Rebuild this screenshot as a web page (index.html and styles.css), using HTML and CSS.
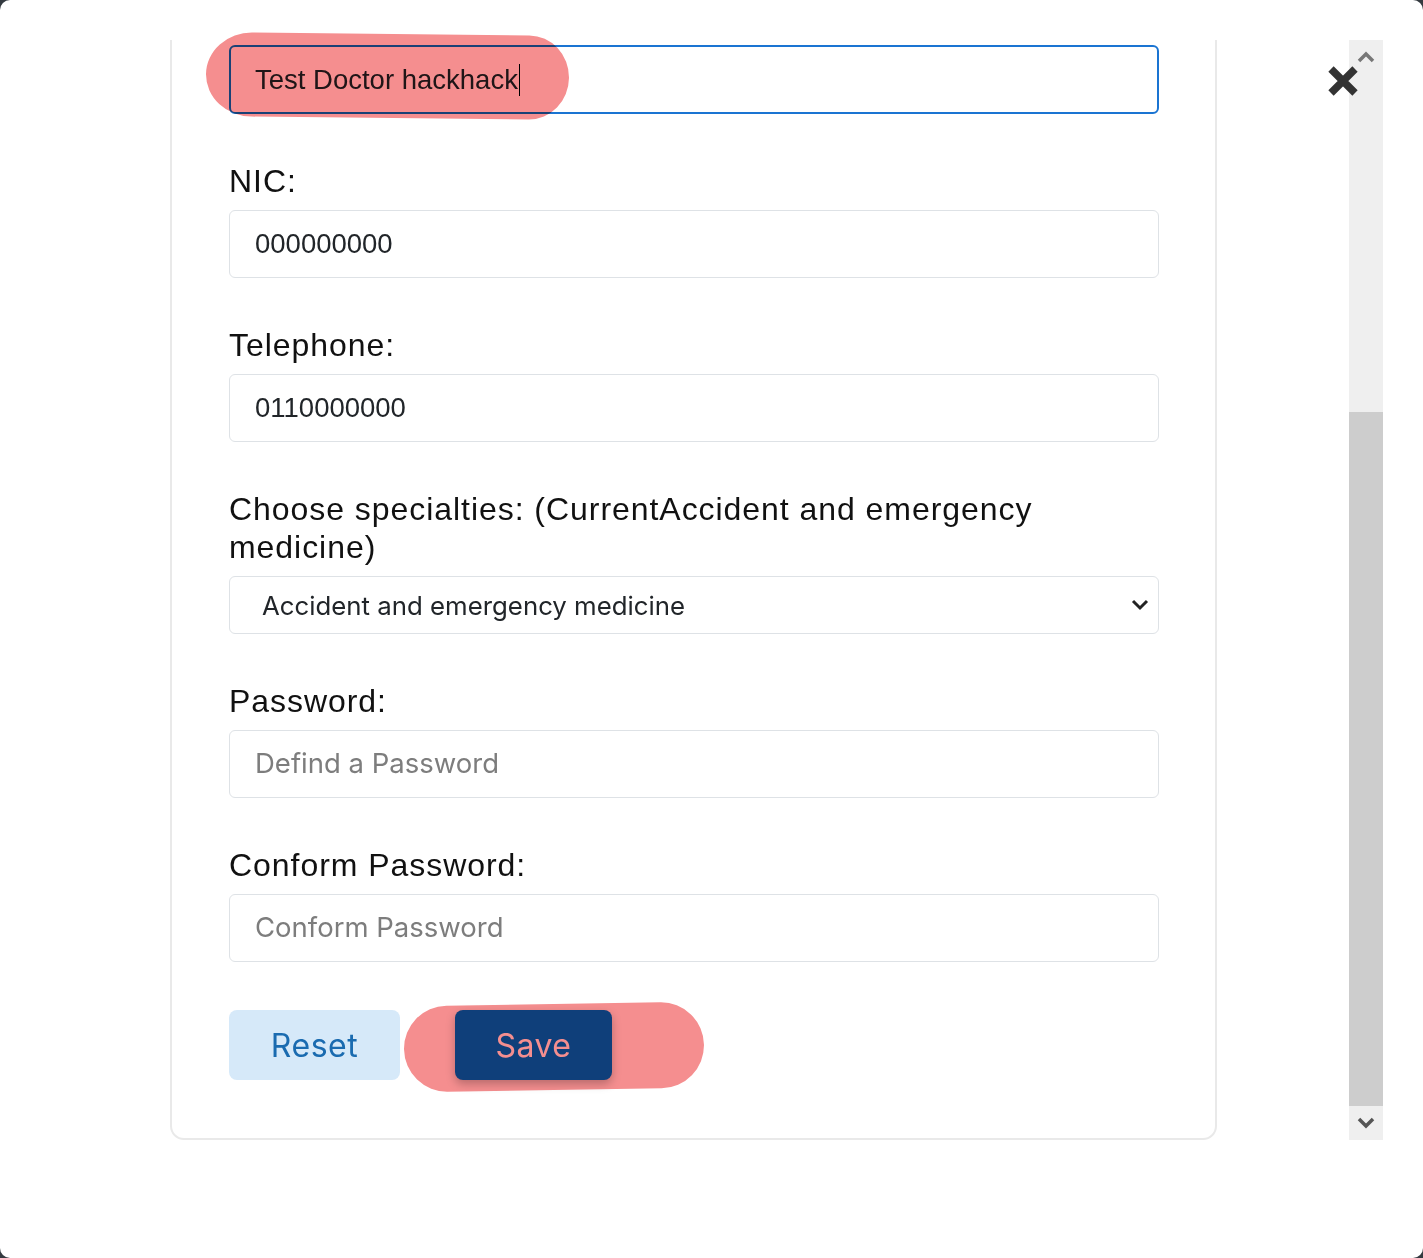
FILE: index.html
```html
<!DOCTYPE html>
<html lang="en">
<head>
<meta charset="utf-8">
<title>Edit Doctor</title>
<link rel="stylesheet" href="styles.css">
</head>
<body>
<div class="modal">
  <div class="viewport">
    <div class="scroller">
      <form class="card">
        <div class="field">
          <div class="input input-focus" aria-label="Name">Test Doctor hackhack<span class="caret"></span></div>
        </div>
        <div class="field">
          <label class="label">NIC:</label>
          <input class="input" value="000000000">
        </div>
        <div class="field">
          <label class="label">Telephone:</label>
          <input class="input" value="0110000000">
        </div>
        <div class="field">
          <label class="label">Choose specialties: (CurrentAccident and emergency medicine)</label>
          <div class="select-wrap">
            <select class="select"><option>Accident and emergency medicine</option></select>
            <svg class="select-chev" width="18" height="12" viewBox="0 0 18 12"><polyline points="2,2 9,9 16,2" fill="none" stroke="#222" stroke-width="3"/></svg>
          </div>
        </div>
        <div class="field">
          <label class="label">Password:</label>
          <input class="input" type="password" placeholder="Defind a Password">
        </div>
        <div class="field">
          <label class="label">Conform Password:</label>
          <input class="input" type="password" placeholder="Conform Password">
        </div>
        <div class="actions">
          <button type="button" class="btn btn-reset">Reset</button>
          <button type="button" class="btn btn-save">Save</button>
        </div>
      </form>
    </div>
    <div class="scrollbar">
      <div class="sb-btn"><svg width="18" height="14" viewBox="0 0 18 14"><polyline points="2,11 9,4 16,11" fill="none" stroke="#777" stroke-width="3.5"/></svg></div>
      <div class="sb-track"><div class="sb-thumb"></div></div>
      <div class="sb-btn"><svg width="18" height="14" viewBox="0 0 18 14"><polyline points="2,3 9,10 16,3" fill="none" stroke="#555" stroke-width="3.5"/></svg></div>
    </div>
  </div>
  <button type="button" class="close" aria-label="Close"><svg width="32" height="32" viewBox="0 0 32 32"><path d="M4 4 L28 28 M28 4 L4 28" stroke="#333" stroke-width="7.5"/></svg></button>
  <div class="hl hl-1"></div>
  <div class="hl hl-2"></div>
</div>
</body>
</html>
```
FILE: styles.css
```css
* { box-sizing: border-box; }
html, body { margin: 0; padding: 0; }
body {
  background: #343a40;
  width: 1423px;
  height: 1258px;
  overflow: hidden;
}
.modal {
  position: relative;
  width: 1423px;
  height: 1258px;
  background: #fff;
  border-radius: 10px;
  padding: 40px 40px 0 40px;
}
.viewport {
  display: flex;
  height: 1100px;
}
.scroller {
  flex: 1;
  overflow: hidden;
  display: flex;
  flex-direction: column;
  justify-content: flex-end;
  align-items: center;
  padding-right: 2px;
}
.card {
  flex-shrink: 0;
  width: 1047px;
  border: 2px solid #e9e9e9;
  border-radius: 14px;
  padding: 90px 56px 58px 57px;
  margin: 0;
}
.field { margin-bottom: 48px; }
.label {
  display: block;
  font-family: "Liberation Sans", Arial, sans-serif;
  font-size: 32px;
  letter-spacing: 0.95px;
  line-height: 38px;
  color: #111;
  margin-bottom: 10px;
}
.input {
  display: flex;
  align-items: center;
  width: 100%;
  height: 68px;
  border: 1px solid #dee2e6;
  border-radius: 6px;
  padding: 0 25px;
  font-family: "Liberation Sans", Arial, sans-serif;
  font-size: 27.5px;
  color: #212529;
  background: #fff;
  outline: none;
  margin: 0;
}
.input::placeholder {
  font-family: Inter, "Liberation Sans", sans-serif;
  color: #7d7d7d;
  font-size: 27.5px;
}
.input-focus {
  border: 2px solid #1a74d2;
  padding: 0 24px;
  height: 69px;
  margin-top: -1px;
}
.caret {
  display: inline-block;
  width: 1.5px;
  height: 32px;
  background: #000;
  margin-left: 1px;
}
.select-wrap { position: relative; }
.select {
  -webkit-appearance: none;
  appearance: none;
  width: 100%;
  height: 58px;
  border: 1px solid #dee2e6;
  border-radius: 6px;
  padding: 0 60px 0 32px;
  font-family: Inter, "Liberation Sans", sans-serif;
  font-size: 25.8px;
  color: #212529;
  background: #fff;
  outline: none;
}
.select-chev {
  position: absolute;
  right: 10px;
  top: 23px;
}
.actions {
  display: flex;
  gap: 55px;
}
.btn {
  height: 70px;
  border: none;
  border-radius: 8px;
  font-family: Inter, "Liberation Sans", sans-serif;
  font-size: 32px;
  letter-spacing: 0.5px;
  cursor: pointer;
}
.btn-reset {
  width: 171px;
  background: #d6e9f9;
  color: #1a6bb0;
}
.btn-save {
  width: 157px;
  background: #0f71d9;
  color: #fff;
  box-shadow: 0 4px 10px rgba(0, 0, 0, 0.25);
}
.scrollbar {
  width: 34px;
  background: #efefef;
  display: flex;
  flex-direction: column;
}
.sb-btn {
  height: 34px;
  display: flex;
  align-items: center;
  justify-content: center;
}
.sb-track {
  flex: 1;
  display: flex;
  flex-direction: column;
  justify-content: flex-end;
}
.sb-thumb {
  height: 694px;
  background: #cdcdcd;
}
.close {
  position: absolute;
  left: 1327px;
  top: 65px;
  width: 32px;
  height: 32px;
  padding: 0;
  border: none;
  background: transparent;
  line-height: 0;
}
.hl {
  position: absolute;
  background: #f58e8f;
  mix-blend-mode: multiply;
  pointer-events: none;
}
.hl-1 {
  left: 206px;
  top: 34px;
  width: 363px;
  height: 84px;
  border-radius: 46px 40px 40px 46px / 42px;
  transform: rotate(0.6deg);
}
.hl-2 {
  left: 404px;
  top: 1004px;
  width: 300px;
  height: 86px;
  border-radius: 44px;
  transform: rotate(-0.9deg);
}
```
